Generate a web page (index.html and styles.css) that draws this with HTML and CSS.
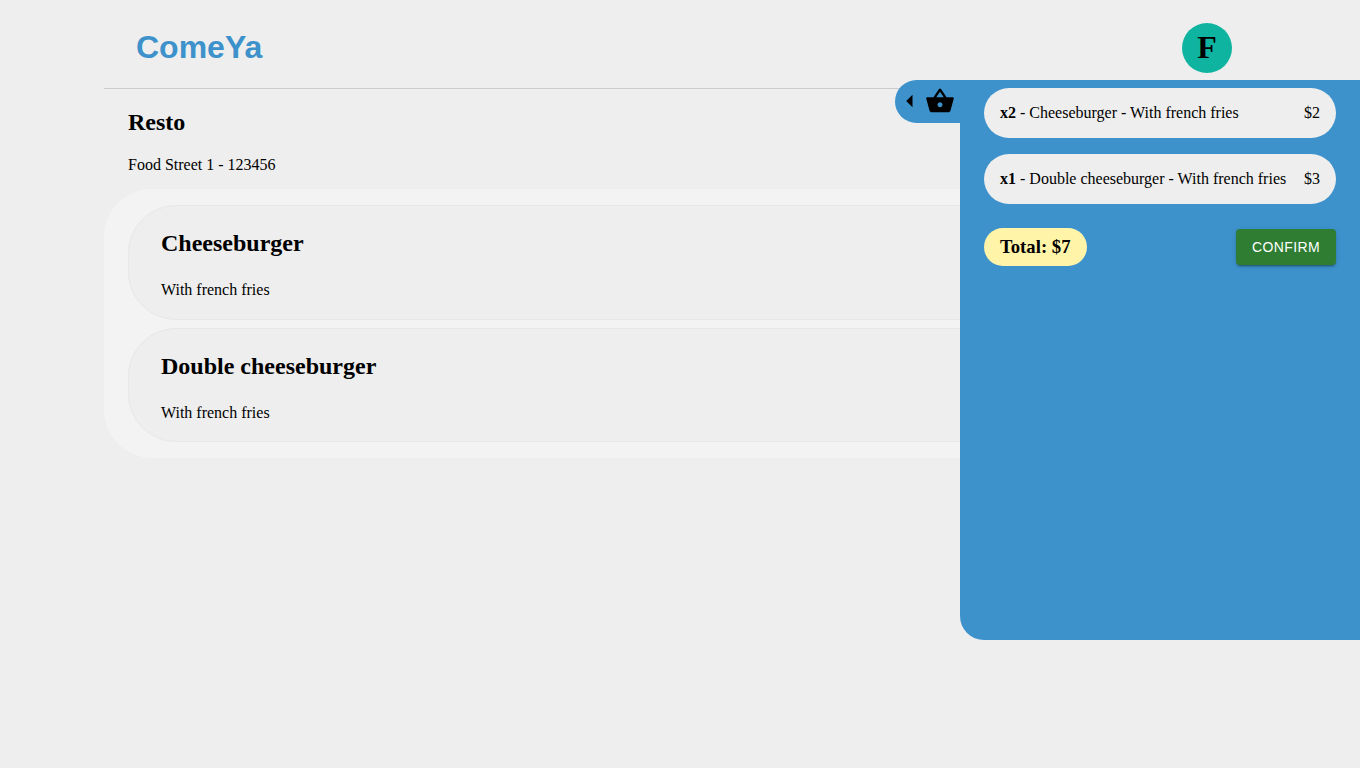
FILE: index.html
```html
<!DOCTYPE html>
<html lang="en">
<head>
<meta charset="utf-8">
<title>ComeYa</title>
<link rel="stylesheet" href="styles.css">
</head>
<body>
<div class="page">
  <header class="header">
    <h1 class="brand">ComeYa</h1>
    <div class="avatar">F</div>
  </header>
  <main>
    <section class="restaurant">
      <h2 class="title">Resto</h2>
      <p class="text">Food Street 1 - 123456</p>
    </section>
    <section class="menu">
      <article class="dish">
        <h2 class="title">Cheeseburger</h2>
        <p class="text">With french fries</p>
      </article>
      <article class="dish">
        <h2 class="title">Double cheeseburger</h2>
        <p class="text">With french fries</p>
      </article>
    </section>
  </main>
</div>
<aside class="cart">
  <div class="cart-tab">
    <svg class="icon" viewBox="0 0 24 24"><path d="m14 7-5 5 5 5V7z"/></svg>
    <svg class="icon" viewBox="0 0 24 24"><path d="m17.21 9-4.38-6.56c-.19-.28-.51-.42-.83-.42-.32 0-.64.14-.83.43L6.79 9H2c-.55 0-1 .45-1 1 0 .09.01.18.04.27l2.54 9.27c.23.84 1 1.46 1.92 1.46h13c.92 0 1.69-.62 1.93-1.46l2.54-9.27L23 10c0-.55-.45-1-1-1h-4.79zM9 9l3-4.4L15 9H9zm3 8c-1.1 0-2-.9-2-2s.9-2 2-2 2 .9 2 2-.9 2-2 2z"/></svg>
  </div>
  <div class="cart-panel">
    <div class="cart-item"><span><b>x2</b> - Cheeseburger - With french fries</span><span>$2</span></div>
    <div class="cart-item"><span><b>x1</b> - Double cheeseburger - With french fries</span><span>$3</span></div>
    <div class="cart-footer">
      <div class="total">Total: $7</div>
      <button class="confirm">CONFIRM</button>
    </div>
  </div>
</aside>
</body>
</html>
```
FILE: styles.css
```css
* { box-sizing: border-box; }
body {
  margin: 0;
  background: #eee;
  color: #000;
  font-family: "Liberation Serif", "Times New Roman", serif;
  font-size: 16px;
  overflow: hidden;
}
.page { width: 1152px; margin: 0 auto; }
.header {
  display: flex;
  align-items: center;
  justify-content: space-between;
  height: 89px;
  padding: 7px 24px 0 32px;
  border-bottom: 1px solid #ccc;
}
.brand {
  margin: 0 0 1px;
  color: #3d92cc;
  font: bold 32px/37px "Liberation Sans", Arial, sans-serif;
}
.avatar {
  width: 50px;
  height: 50px;
  border-radius: 50%;
  background: #0fb4a0;
  font-size: 32px;
  font-weight: bold;
  line-height: 49px;
  text-align: center;
}
.title { margin: 0; font-size: 24px; line-height: 27px; }
.text { margin: 0; line-height: 18px; }
.restaurant {
  display: flex;
  flex-direction: column;
  gap: 20px;
  height: 100px;
  padding: 20px 24px 0;
}
.menu {
  display: flex;
  flex-direction: column;
  gap: 8px;
  height: 269px;
  padding: 16px 24px;
  border-radius: 48px;
  background: #f3f3f3;
}
.dish {
  display: flex;
  flex: 1;
  flex-direction: column;
  gap: 24px;
  padding: 24px 32px 0;
  border: 1px solid #e7e7e7;
  border-radius: 48px;
  background: #eee;
}
.cart {
  position: absolute;
  top: 80px;
  right: 0;
  display: flex;
  align-items: flex-start;
}
.cart-tab {
  display: flex;
  width: 65px;
  height: 43px;
  padding-top: 6px;
  border-radius: 24px 0 0 24px;
  background: #3d92cc;
}
.icon { width: 30px; height: 30px; }
.cart-panel {
  display: flex;
  flex-direction: column;
  gap: 16px;
  width: 400px;
  height: 560px;
  padding: 8px 24px;
  border-radius: 0 0 0 24px;
  background: #3d92cc;
}
.cart-item {
  display: flex;
  align-items: center;
  justify-content: space-between;
  height: 50px;
  padding: 0 16px;
  border-radius: 25px;
  background: #eee;
  white-space: nowrap;
}
.cart-footer {
  display: flex;
  align-items: center;
  justify-content: space-between;
  margin-top: 8px;
}
.total {
  height: 38px;
  padding: 0 16px;
  border-radius: 24px;
  background: #fff4a8;
  font-size: 18.72px;
  font-weight: bold;
  line-height: 37px;
}
.confirm {
  width: 100px;
  height: 36px;
  padding: 0;
  border: 0;
  border-radius: 4px;
  background: #2e7d32;
  box-shadow: 0 3px 1px -2px rgba(0,0,0,.2), 0 2px 2px rgba(0,0,0,.14), 0 1px 5px rgba(0,0,0,.12);
  color: #fff;
  font: 14px/24.5px "Liberation Sans", Arial, sans-serif;
  letter-spacing: .4px;
}
```
